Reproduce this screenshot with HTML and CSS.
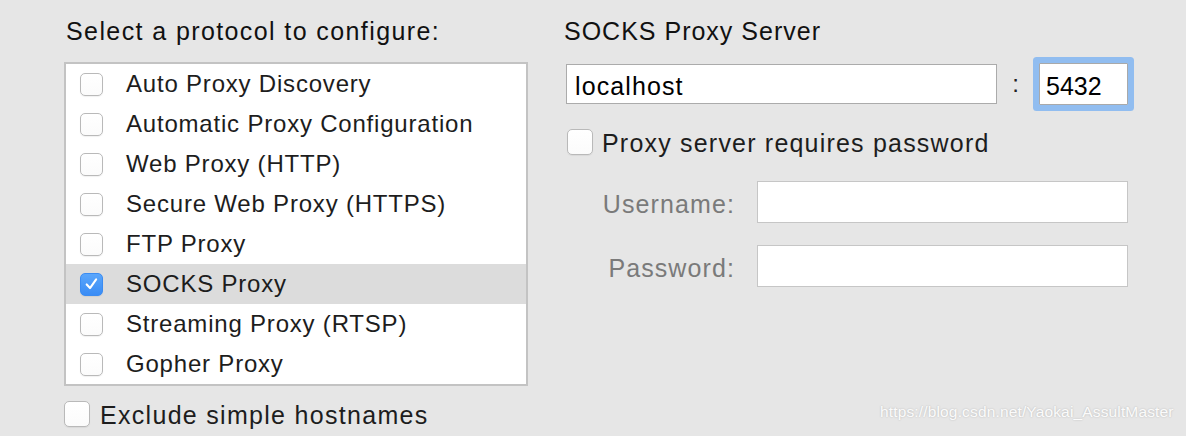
FILE: index.html
```html
<!DOCTYPE html>
<html>
<head>
<meta charset="utf-8">
<link rel="stylesheet" href="styles.css">
</head>
<body>
<div class="pane">
  <div class="left">
    <div class="title title-left">Select a protocol to configure:</div>
    <ul class="list">
      <li class="row"><span class="cb"></span><span class="lbl">Auto Proxy Discovery</span></li>
      <li class="row"><span class="cb"></span><span class="lbl">Automatic Proxy Configuration</span></li>
      <li class="row"><span class="cb"></span><span class="lbl">Web Proxy (HTTP)</span></li>
      <li class="row"><span class="cb"></span><span class="lbl">Secure Web Proxy (HTTPS)</span></li>
      <li class="row"><span class="cb"></span><span class="lbl">FTP Proxy</span></li>
      <li class="row selected"><span class="cb checked"><svg viewBox="0 0 24 24" width="24" height="24"><path d="M6.5 12.5 L10.3 16.6 L17.3 6.8" fill="none" stroke="#fff" stroke-width="2.4" stroke-linecap="round" stroke-linejoin="round"/></svg></span><span class="lbl">SOCKS Proxy</span></li>
      <li class="row"><span class="cb"></span><span class="lbl">Streaming Proxy (RTSP)</span></li>
      <li class="row"><span class="cb"></span><span class="lbl">Gopher Proxy</span></li>
    </ul>
    <div class="check-row exclude"><span class="cb big"></span><span class="txt">Exclude simple hostnames</span></div>
  </div>
  <div class="right">
    <div class="title title-right">SOCKS Proxy Server</div>
    <div class="host-row">
      <div class="field host">localhost</div>
      <span class="colon">:</span>
      <div class="field port">5432</div>
    </div>
    <div class="check-row pw"><span class="cb big"></span><span class="txt">Proxy server requires password</span></div>
    <div class="cred-row user"><span class="cred-label">Username:</span><div class="field cred"></div></div>
    <div class="cred-row pass"><span class="cred-label">Password:</span><div class="field cred"></div></div>
  </div>
</div>
<div class="watermark">https://blog.csdn.net/Yaokai_AssultMaster</div>
</body>
</html>
```
FILE: styles.css
```css
html, body {
  margin: 0;
  padding: 0;
}
body {
  width: 1186px;
  height: 436px;
  background: #e6e6e6;
  font-family: "Liberation Sans", Arial, Helvetica, sans-serif;
  color: #1d1d1d;
  position: relative;
  overflow: hidden;
}
.pane {
  display: flex;
  padding-left: 64px;
}
.left {
  width: 464px;
  padding-top: 16px;
}
.title {
  font-size: 25px;
  line-height: 30px;
  height: 30px;
  color: #111;
  white-space: nowrap;
}
.title-left {
  padding-left: 2px;
  letter-spacing: 1.4px;
  margin-bottom: 16px;
}
.list {
  list-style: none;
  margin: 0;
  padding: 0;
  background: #fff;
  border: 2px solid #c3c3c3;
}
.row {
  height: 40px;
  display: flex;
  align-items: center;
  padding-left: 14px;
}
.row.selected {
  background: #dcdcdc;
}
.cb {
  box-sizing: border-box;
  width: 23px;
  height: 23px;
  border: 1px solid #b9b9b9;
  border-radius: 5px;
  background: linear-gradient(#ffffff, #fbfbfb);
  box-shadow: 0 1px 1px rgba(0,0,0,0.06);
  flex: none;
  display: flex;
  align-items: center;
  justify-content: center;
}
.cb.checked {
  border-color: #3b8cf2;
  background: linear-gradient(#5aa6fb, #3a8cf5);
}
.cb.checked svg {
  display: block;
}
.cb.big {
  width: 26px;
  height: 26px;
}
.lbl {
  margin-left: 23px;
  font-size: 24px;
  letter-spacing: 0.8px;
  white-space: nowrap;
}
.check-row {
  display: flex;
  align-items: center;
  height: 26px;
}
.check-row .txt {
  font-size: 25px;
  letter-spacing: 1.2px;
  white-space: nowrap;
  color: #1d1d1d;
  position: relative;
  top: 1px;
}
.exclude {
  margin-top: 15px;
}
.exclude .txt {
  margin-left: 10px;
  letter-spacing: 1.3px;
}
.right {
  margin-left: 36px;
  padding-top: 16px;
}
.title-right {
  letter-spacing: 1px;
  margin-bottom: 17px;
}
.host-row {
  display: flex;
  align-items: center;
  height: 42px;
}
.field {
  box-sizing: border-box;
  background: #fff;
  border: 1px solid #c6c6c6;
  font-size: 25px;
  color: #000;
  display: flex;
  align-items: center;
  white-space: nowrap;
}
.host {
  margin-left: 2px;
  width: 431px;
  height: 40px;
  border-color: #ababab;
  padding-left: 8px;
  padding-top: 5px;
  letter-spacing: 1.1px;
}
.colon {
  width: 42px;
  box-sizing: border-box;
  padding-right: 5px;
  text-align: center;
  font-size: 24px;
  color: #222;
}
.port {
  width: 89px;
  height: 42px;
  padding-left: 6px;
  padding-top: 4px;
  border-color: #a9a9a9;
  border-radius: 1px;
  box-shadow: 0 0 0 6px #91bdf0;
}
.pw {
  margin-top: 24px;
  margin-left: 3px;
}
.pw .txt {
  margin-left: 9px;
}
.cred-row {
  display: flex;
  align-items: center;
  height: 42px;
}
.user {
  margin-top: 26px;
}
.pass {
  margin-top: 22px;
}
.cred-label {
  width: 171px;
  text-align: right;
  font-size: 25px;
  letter-spacing: 1.1px;
  color: #7a7a7a;
  white-space: nowrap;
  position: relative;
  top: 2px;
}
.cred {
  margin-left: 22px;
  width: 371px;
  height: 42px;
}
.watermark {
  position: absolute;
  left: 880px;
  top: 403px;
  font-size: 15.5px;
  letter-spacing: 0.15px;
  color: rgba(255,255,255,0.95);
  text-shadow: 0 0 2px rgba(0,0,0,0.22);
  white-space: nowrap;
}
```
